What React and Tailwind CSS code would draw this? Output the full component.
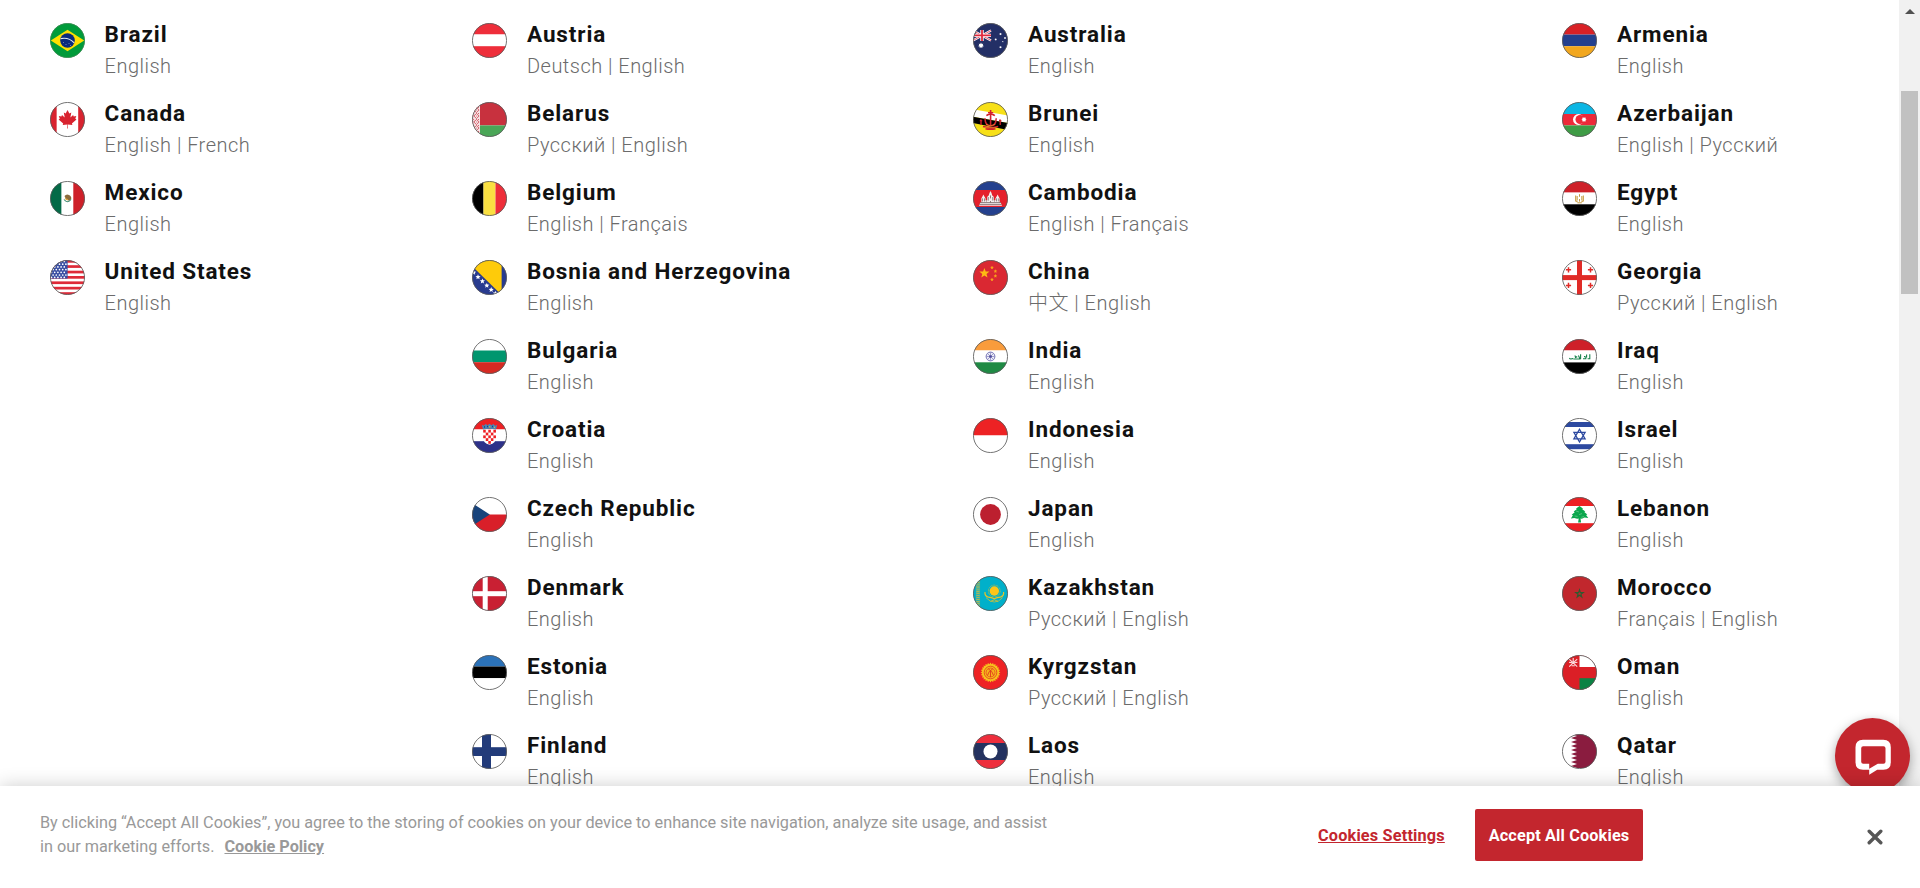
import React from "react";

/* Five-pointed star polygon, drawn inside an SVG flag. */
function Star({ cx, cy, r, fill, inner = 0.42, points = 5, ...rest }) {
  const pts = [];
  for (let i = 0; i < points * 2; i++) {
    const rad = i % 2 ? r * inner : r;
    const a = (Math.PI * i) / points - Math.PI / 2;
    pts.push(`${(cx + rad * Math.cos(a)).toFixed(2)},${(cy + rad * Math.sin(a)).toFixed(2)}`);
  }
  return <polygon points={pts.join(" ")} fill={fill} {...rest} />;
}

const R = (x, y, w, h, fill) => <rect x={x} y={y} width={w} height={h} fill={fill} />;
const H3 = (a, b, c, y1 = 11.5, y2 = 23.2) => (
  <>
    {R(0, 0, 35, y1, a)}
    {R(0, y1, 35, y2 - y1, b)}
    {R(0, y2, 35, 35 - y2, c)}
  </>
);
const V3 = (a, b, c, x1 = 11.5, x2 = 23.2) => (
  <>
    {R(0, 0, x1, 35, a)}
    {R(x1, 0, x2 - x1, 35, b)}
    {R(x2, 0, 35 - x2, 35, c)}
  </>
);

const flags = {
  Brazil: (
    <>
      {R(0, 0, 35, 35, "#009b3a")}
      <path d="M.8 17.5 17.5 6.8 34.2 17.5 17.5 28.3Z" fill="#fedf00" />
      <circle cx="17.5" cy="17.5" r="7.3" fill="#0a2a7c" />
      <path d="M10.6 15.6q8-1.8 13.6 4.2" fill="none" stroke="#dfe8ee" strokeWidth="1.1" />
      <path d="M13 19.5h1M15.5 21.5h1M18.5 20.5h1M20 22.5h1" stroke="#7f92c4" strokeWidth=".8" />
    </>
  ),
  Canada: (
    <>
      {V3("#d8232f", "#fff", "#d8232f", 6.8, 28.2)}
      <path
        d="M17.5 8l1.9 3.5 1.9-.9-.9 5 2.7-2.6.6 1.4 2.6-.4-1 2.8 1.2.8-4.6 3.9.5 1.6-4.6-.7.1 4h-.7l.1-4-4.6.7.5-1.6-4.6-3.9 1.2-.8-1-2.8 2.6.4.6-1.4 2.7 2.6-.9-5 1.9.9z"
        fill="#d8232f"
      />
    </>
  ),
  Mexico: (
    <>
      {V3("#046a47", "#fff", "#ce2029", 11.6, 23.3)}
      <path d="M14.5 15q2-2.4 4.5-1 2.8 1.2 2.2 4.2l-2.2 1.6-3-1.6z" fill="#8b6b3d" />
      <path d="M14 18.5q3.5 4.5 7 0" fill="none" stroke="#3f8a72" strokeWidth="1.2" />
      <path d="M15 17.5l3 1.4" stroke="#d9a23a" strokeWidth="1.2" />
    </>
  ),
  "United States": (
    <>
      {R(0, 0, 35, 35, "#fff")}
      {[0, 5.2, 10.7, 16, 21.4, 26.8, 32.2].map((y) => (
        <rect key={y} x="0" y={y} width="35" height="2.7" fill="#de2a38" />
      ))}
      {R(0, 0, 17.6, 18.6, "#3a4fa3")}
      {[1.5, 4.2, 6.9, 9.6, 12.3, 15, 17.4].map((y, r) =>
        [1.5, 4.7, 7.9, 11.1, 14.3].map((x) => (
          <circle key={`${x}-${y}`} cx={x + (r % 2) * 1.6} cy={y} r=".85" fill="#fff" />
        ))
      )}
    </>
  ),
  Austria: H3("#ee2e3a", "#fff", "#ee2e3a"),
  Belarus: (
    <>
      {R(0, 0, 35, 23.4, "#c8313e")}
      {R(0, 23.4, 35, 12, "#4aa657")}
      {R(0, 0, 8, 35, "#f7e3e4")}
      {[2, 8, 14, 20, 26, 32].map((y) => (
        <path
          key={y}
          d={`M4.5 ${y - 2.6}l2.6 2.6-2.6 2.6-2.6-2.6zM.4 ${y}h1M4.3 ${y}h.9M1 ${y - 3}l1.2 1M7 ${y - 3}l-1 1`}
          fill="none"
          stroke="#cb4450"
          strokeWidth=".8"
        />
      ))}
    </>
  ),
  Belgium: V3("#000", "#fae042", "#ee2e3a", 11.5, 23.5),
  "Bosnia and Herzegovina": (
    <>
      {R(0, 0, 35, 35, "#283b8f")}
      <path d="M-6 0H29.6V35z" fill="#fecb0a" />
      {[
        [1.6, 12.6],
        [6, 17],
        [10.4, 21.2],
        [14.8, 25.6],
        [19.2, 29.8],
        [23.4, 33.4],
      ].map(([x, y]) => (
        <Star key={x} cx={x} cy={y} r={2.7} inner={0.45} fill="#fff" />
      ))}
    </>
  ),
  Bulgaria: H3("#fff", "#00966e", "#d62a22"),
  Croatia: (
    <>
      {H3("#ee2024", "#fff", "#2d3189")}
      <path d="M11 11.5h13v8.5q0 5-6.5 6.8Q11 25 11 20z" fill="#fff" />
      {[0, 1, 2, 3, 4].map((r) =>
        [0, 1, 2, 3, 4]
          .filter((c) => (r + c) % 2 === 0 && !(r === 4 && c % 4 === 0))
          .map((c) => (
            <rect key={`${r}${c}`} x={11.2 + c * 2.55} y={11.8 + r * 2.8} width="2.55" height="2.8" fill="#ee2024" />
          ))
      )}
      <path d="M11 11.6 9.8 6.8l2 .9 1.9-1.6 1.9 1.2 1.9-1.6 1.9 1.6 1.9-1.2 1.9 1.6 2-.9-1.2 4.8q-6.5-1.8-13 0z" fill="#4a86b4" />
      <path d="M12 9h1M15 8.5h1M20 8.5h1" stroke="#1f3f86" strokeWidth="1.6" />
      <path d="M17 8.8h1.4M22 9.4h1" stroke="#d9b84a" strokeWidth="1.2" />
    </>
  ),
  "Czech Republic": (
    <>
      {R(0, 0, 35, 17.5, "#fff")}
      {R(0, 17.5, 35, 17.5, "#d91f29")}
      <path d="M0 6v23l17.8-11.5z" fill="#18437b" />
    </>
  ),
  Denmark: (
    <>
      {R(0, 0, 35, 35, "#c92033")}
      {R(10.7, 0, 5, 35, "#fff")}
      {R(0, 15.2, 35, 5, "#fff")}
    </>
  ),
  Estonia: H3("#2b72b9", "#000", "#fff"),
  Finland: (
    <>
      {R(0, 0, 35, 35, "#fff")}
      {R(10, 0, 9, 35, "#223b7a")}
      {R(0, 13.2, 35, 8.8, "#223b7a")}
    </>
  ),
  Australia: (
    <>
      {R(0, 0, 35, 35, "#232f66")}
      <path d="M0 7.5l18 10M18 7.5l-18 10" stroke="#fff" strokeWidth="2.2" />
      <path d="M0 7.5l18 10M18 7.5l-18 10" stroke="#e0334a" strokeWidth=".8" />
      <path d="M9 7v11M0 12.4h18" stroke="#fff" strokeWidth="3.4" />
      <path d="M9 7v11M0 12.4h18" stroke="#e0283c" strokeWidth="1.8" />
      <Star cx={8} cy={22.5} r={2.9} points={7} inner={0.6} fill="#fff" />
      <Star cx={27.5} cy={11} r={1.3} points={7} inner={0.6} fill="#fff" />
      <Star cx={22.7} cy={16.5} r={1.2} points={7} inner={0.6} fill="#fff" />
      <Star cx={32} cy={15} r={1.2} points={7} inner={0.6} fill="#fff" />
      <Star cx={29.8} cy={18.6} r={0.9} fill="#fff" />
      <Star cx={27.5} cy={24.2} r={1.3} points={7} inner={0.6} fill="#fff" />
    </>
  ),
  Brunei: (
    <>
      {R(0, 0, 35, 35, "#f7e017")}
      <path d="M0 7.2 35 13.5V21L0 14.8z" fill="#fff" />
      <path d="M0 14.8 35 21v7L0 21z" fill="#000" />
      <g fill="none" stroke="#d3222c">
        <path d="M17.6 8v15" strokeWidth="1.6" />
        <path d="M13.4 13.6q4.2-3.6 8.4 0" strokeWidth="1.6" />
        <path d="M15 10.5h5.2" strokeWidth="1" />
        <path d="M12 16.2q0 7.6 5.6 7.6t5.6-7.6" strokeWidth="1.5" />
        <path d="M8 17.5v5.5M27.2 17.5v5.5M6.8 18.5l2.4.4M26 18.5l2.4.4" strokeWidth="1.4" />
        <path d="M10 24.6q7.6 2.2 15.2 0M12.5 26.8q5 1 10 0" strokeWidth="1.6" />
      </g>
      <path d="M13 22.4q4.6 2.6 9.2 0M11.5 25.7h12" fill="none" stroke="#f0c12c" strokeWidth=".5" />
    </>
  ),
  Cambodia: (
    <>
      {H3("#24408e", "#e5202c", "#24408e", 9, 26)}
      <path
        d="M6 24.8l1.3-3.4h1v-4l1.1-1.8 1-2.2 1 2.2 1.2 1.8v1.8h1.5V16l1.6-1.5.8-2.6 1-1.9 1 1.9.8 2.6 1.6 1.5v3.2h1.5v-1.8l1.2-1.8 1-2.2 1 2.2 1.1 1.8v4h1l1.3 3.4z"
        fill="#f4eeee"
      />
      <path
        d="M7.2 21.6h20.6M6.4 23.4h22.2M9.4 17.4v3M11.6 17.4v3M15.2 16v3.6M17.5 14.4v3M19.8 16v3.6M23.6 17.4v3M25.8 17.4v3M17.5 20v1.4M13.5 19.5v1M21.5 19.5v1"
        stroke="#5e4a4c"
        strokeWidth=".7"
      />
    </>
  ),
  China: (
    <>
      {R(0, 0, 35, 35, "#da2832")}
      <Star cx={11.4} cy={13.2} r={5.3} fill="#fdb913" />
      <Star cx={19} cy={7.6} r={1.9} inner={0.5} fill="#f9a01b" />
      <Star cx={22.4} cy={11.2} r={1.9} inner={0.5} fill="#f9a01b" />
      <Star cx={22.4} cy={16} r={1.9} inner={0.5} fill="#f9a01b" />
      <Star cx={19} cy={19.6} r={1.9} inner={0.5} fill="#f9a01b" />
    </>
  ),
  India: (
    <>
      {H3("#f99c3c", "#fff", "#1f8a44", 11.5, 23.3)}
      <circle cx="17.5" cy="17.5" r="4.4" fill="#eeeef8" stroke="#6a68ae" strokeWidth=".9" />
      <path
        d="M17.5 13.5v8M13.5 17.5h8M14.7 14.7l5.6 5.6M20.3 14.7l-5.6 5.6"
        stroke="#5f5da8"
        strokeWidth=".55"
      />
      <circle cx="17.5" cy="17.5" r="1.3" fill="#4a4899" />
    </>
  ),
  Indonesia: (
    <>
      {R(0, 0, 35, 17.5, "#ed2224")}
      {R(0, 17.5, 35, 17.5, "#fff")}
    </>
  ),
  Japan: (
    <>
      {R(0, 0, 35, 35, "#fff")}
      <circle cx="17.5" cy="17.5" r="10.4" fill="#bc1f2f" />
    </>
  ),
  Kazakhstan: (
    <>
      {R(0, 0, 35, 35, "#00b0ca")}
      <path d="M5 4v27" stroke="#a9b75a" strokeWidth="3.6" strokeDasharray="1.4 .7" />
      <path d="M3.4 3v29M6.6 3v29" stroke="#6fb487" strokeWidth=".5" />
      <circle cx="21.3" cy="15" r="4.7" fill="#fdc518" />
      <circle cx="21.3" cy="15" r="5.9" fill="none" stroke="#c3bd42" strokeWidth=".9" strokeDasharray=".9 .6" />
      <g fill="none" stroke="#e5c229">
        <path d="M12 16q-.6 4 3.4 5.2 3 .4 5.9 1.6 2.9-1.2 5.9-1.6 4-1.2 3.4-5.2" strokeWidth="1.2" />
        <path d="M13 21.6q4 4.6 8.3 4.4 4.3.2 8.3-4.4" strokeWidth=".7" />
        <path d="M17.5 25.4l3.8-1.6 3.8 1.6" strokeWidth=".8" />
      </g>
    </>
  ),
  Kyrgzstan: (
    <>
      {R(0, 0, 35, 35, "#ee2224")}
      <Star cx={17.5} cy={17.5} r={9.9} points={24} inner={0.84} fill="#f6c21c" />
      <circle cx="17.5" cy="17.5" r="6.3" fill="none" stroke="#e8471f" strokeWidth=".9" />
      <circle cx="17.5" cy="17.5" r="4.5" fill="#f6b21c" stroke="#e8471f" strokeWidth=".8" />
      <path d="M14.4 20.6q1-4.6 5.4-6.8M20.6 20.6q-1-4.6-5.4-6.8M17.5 22v-6" fill="none" stroke="#e23a1f" strokeWidth=".9" />
    </>
  ),
  Laos: (
    <>
      {H3("#ee2e3c", "#24325f", "#ee2e3c", 9, 26)}
      <circle cx="17.5" cy="17.5" r="7" fill="#fff" />
    </>
  ),
  Armenia: H3("#d92126", "#24408e", "#f2a71e", 11.6, 23.2),
  Azerbaijan: (
    <>
      {H3("#0bb6e4", "#ed2939", "#3f9c46", 12, 23.4)}
      <circle cx="16.4" cy="17.5" r="5.4" fill="#fff" />
      <circle cx="18" cy="17.5" r="4.5" fill="#ed2939" />
      <Star cx={22} cy={17.5} r={2.7} points={8} inner={0.6} fill="#fff" />
    </>
  ),
  Egypt: (
    <>
      {H3("#ce2029", "#fff", "#000", 11.6, 23.3)}
      <path d="M13.6 14.4v5.4l2 1.2M21.4 14.4v5.4l-2 1.2M15.2 15v4.6M19.8 15v4.6" fill="none" stroke="#cfa95a" strokeWidth="1.2" />
      <path d="M17.5 13.2v2.6M17.5 18v2.6M15.4 21.8h4.4" fill="none" stroke="#c49a45" strokeWidth="1" />
    </>
  ),
  Georgia: (
    <>
      {R(0, 0, 35, 35, "#fff")}
      {R(15, 0, 5, 35, "#e02b27")}
      {R(0, 15.1, 35, 5, "#e02b27")}
      <path
        d="M6.5 7.2v5.2M3.9 9.8h5.2M28.5 7.2v5.2M25.9 9.8h5.2M6.5 22.8V28M3.9 25.4h5.2M28.5 22.8V28M25.9 25.4h5.2"
        stroke="#e02b27"
        strokeWidth="1.5"
      />
    </>
  ),
  Iraq: (
    <>
      {H3("#ce2029", "#fff", "#000", 11.5, 23.4)}
      <path
        d="M7.4 19q.6 1.4 2.4.8l1.4-.2M11.4 20h7.2M12.6 16.8l2 1.2-1.6.8M16.4 16.6l1.4 3M18.6 15.2v4.8M21 19.8h2.8v-2.6M22 17.6h1M24.6 15.4v3M25.6 19.8h2.2v-4.6"
        fill="none"
        stroke="#16824b"
        strokeWidth="1.1"
      />
    </>
  ),
  Israel: (
    <>
      {R(0, 0, 35, 35, "#fff")}
      {R(0, 4, 35, 5, "#2c49a0")}
      {R(0, 26.2, 35, 5, "#2c49a0")}
      <path d="M17.5 11.2l5.6 9.7H11.9zM17.5 24l-5.6-9.7h11.2z" fill="none" stroke="#2c49a0" strokeWidth="1.3" />
    </>
  ),
  Lebanon: (
    <>
      {H3("#ed2024", "#fff", "#ed2024", 9, 26.2)}
      <path
        d="M17.5 9l3.4 2.4-.6.8 3 2.2-1 .7 3 2.4-1.2.5 2.2 3-3.8-.4-2.6 1.2-1.4-.4.6 4h-3l.6-4-1.6.4-2.8-.8-3.4.4 2-3.2-1.2-.4 3-2.6-1-.6 3-2.4-.6-.8z"
        fill="#0ba74d"
      />
      <path d="M14 14l3 1M20 16.6l-3 1M12.6 19l3 .4M22 19.6l-2.6.6" stroke="#7fd19c" strokeWidth=".6" />
    </>
  ),
  Morocco: (
    <>
      {R(0, 0, 35, 35, "#c1272d")}
      <Star cx={17.5} cy={17.8} r={3.9} inner={0.38} fill="none" stroke="#2f5a2f" strokeWidth="1.1" />
    </>
  ),
  Oman: (
    <>
      {R(0, 0, 35, 35, "#db1f26")}
      {R(17.5, 0, 17.5, 12, "#fff")}
      {R(17.5, 23.2, 17.5, 12, "#0c8244")}
      <path
        d="M7.2 4.2l8 7.4M15.2 4.2l-8 7.4M11.2 3v5M7 7.2l3 .6M12.4 7.8l3-.6M9.6 10.8h3.2"
        fill="none"
        stroke="#fae0e1"
        strokeWidth="1.1"
      />
    </>
  ),
  Qatar: (
    <>
      {R(0, 0, 35, 35, "#fff")}
      <path
        d="M35 0H9l6 2-6 2 6 2-6 2 6 2-6 2 6 2-6 2 6 2-6 2 6 2-6 2 6 2-6 2 6 2-6 2 6 2H35z"
        fill="#8a1c3f"
      />
    </>
  ),
};

const columns = [
  {
    width: "w-[422px]",
    gap: "gap-[19.6px]",
    items: [
      ["Brazil", "English"],
      ["Canada", "English | French"],
      ["Mexico", "English"],
      ["United States", "English"],
    ],
  },
  {
    width: "w-[501px]",
    gap: "gap-5",
    items: [
      ["Austria", "Deutsch | English"],
      ["Belarus", "Русский | English"],
      ["Belgium", "English | Français"],
      ["Bosnia and Herzegovina", "English"],
      ["Bulgaria", "English"],
      ["Croatia", "English"],
      ["Czech Republic", "English"],
      ["Denmark", "English"],
      ["Estonia", "English"],
      ["Finland", "English"],
    ],
  },
  {
    width: "w-[589px]",
    gap: "gap-5",
    items: [
      ["Australia", "English"],
      ["Brunei", "English"],
      ["Cambodia", "English | Français"],
      ["China", "中文 | English"],
      ["India", "English"],
      ["Indonesia", "English"],
      ["Japan", "English"],
      ["Kazakhstan", "Русский | English"],
      ["Kyrgzstan", "Русский | English"],
      ["Laos", "English"],
    ],
  },
  {
    width: "w-[330px]",
    gap: "gap-5",
    items: [
      ["Armenia", "English"],
      ["Azerbaijan", "English | Русский"],
      ["Egypt", "English"],
      ["Georgia", "Русский | English"],
      ["Iraq", "English"],
      ["Israel", "English"],
      ["Lebanon", "English"],
      ["Morocco", "Français | English"],
      ["Oman", "English"],
      ["Qatar", "English"],
    ],
  },
];

function Flag({ name }) {
  const id = "clip-" + name.replace(/\s/g, "");
  return (
    <svg viewBox="0 0 35 35" className="mt-[5px] size-[35px] shrink-0" aria-hidden="true">
      <clipPath id={id}>
        <circle cx="17.5" cy="17.5" r="17.3" />
      </clipPath>
      <g clipPath={`url(#${id})`}>{flags[name]}</g>
      <circle cx="17.5" cy="17.5" r="17.05" fill="none" stroke={name === "Brazil" ? "#3f8a55" : "#5c5c5c"} strokeWidth=".85" />
    </svg>
  );
}

function Country({ name, languages, gap }) {
  return (
    <li className={`flex h-[79px] ${gap}`}>
      <Flag name={name} />
      <div className="whitespace-nowrap">
        <h3 className="h-[33px] text-[22.5px] leading-[33px] font-bold tracking-[0.88px] text-[#111]">{name}</h3>
        <p className="h-[31px] text-[20px] leading-[31px] font-light tracking-[0.48px] text-[#6b6b6b]">{languages}</p>
      </div>
    </li>
  );
}

function Scrollbar() {
  return (
    <div className="flex h-full w-[21px] shrink-0 flex-col items-center bg-[#f1f1f1]">
      <svg viewBox="0 0 10 5" className="mt-[9px] h-[5px] w-[10px]" aria-hidden="true">
        <path d="M0 5 5 0l5 5z" fill="#505050" />
      </svg>
      <div className="mt-[77px] h-[203px] w-[17px] bg-[#c1c1c1]" />
    </div>
  );
}

function ChatButton() {
  return (
    <button className="absolute top-[718px] left-[1835px] flex size-[75px] items-center justify-center rounded-full bg-[#c3262e] shadow-[0_4px_12px_rgba(0,0,0,0.35)]">
      <svg viewBox="0 0 36 36" className="size-9 overflow-visible" aria-hidden="true">
        <path
          d="M8 1.8H28.3Q35.8 1.8 35.8 9.3V24.3Q35.8 31.8 28.3 31.8H22.2L14.2 36.8V31.8H8Q.5 31.8 .5 24.3V9.3Q.5 1.8 8 1.8ZM8.2 8.2q-2 0-2 2V23.8q0 2 2 2H14.2V30.8L22.8 25.8H28.5q2 0 2-2V10.2q0-2-2-2Z"
          fill="#fff"
          fillRule="evenodd"
        />
      </svg>
    </button>
  );
}

function CookieBanner() {
  return (
    <section className="absolute inset-x-0 bottom-0 flex h-[102px] bg-white pl-10 shadow-[0_0_18px_rgba(0,0,0,0.2)]">
      <p className="mt-[25px] w-[1278px] text-[16.26px] leading-6 text-[#999]">
        By clicking “Accept All Cookies”, you agree to the storing of cookies on your device to enhance site navigation, analyze site usage, and assist
        <br />
        in our marketing efforts.
        <a className="ml-[10px] font-bold underline">Cookie Policy</a>
      </p>
      <button className="mt-[23px] h-[52px] w-[127px] pt-[2px] text-left text-[16.26px] font-bold tracking-[0.18px] whitespace-nowrap text-[#c3262e] underline">
        Cookies Settings
      </button>
      <button className="mt-[23px] ml-[30px] h-[52px] w-[168px] rounded-[2px] bg-[#c3262e] pt-[2px] text-[16.26px] font-bold tracking-[0.15px] whitespace-nowrap text-white">
        Accept All Cookies
      </button>
      <svg viewBox="0 0 16 16" className="mt-[43px] ml-[224px] size-4" aria-hidden="true">
        <path d="M2.2 2.2l11.6 11.6M13.8 2.2 2.2 13.8" stroke="#565656" strokeWidth="3.4" strokeLinecap="round" />
      </svg>
    </section>
  );
}

export default function App() {
  return (
    <div className="relative flex h-[888px] w-[1920px] overflow-hidden bg-white font-[Roboto,'Noto_Sans_CJK_SC',sans-serif]">
      <main className="flex min-w-0 flex-1 items-start overflow-hidden pt-[18px] pl-[50px]">
        {columns.map((c) => (
          <ul key={c.width} className={`${c.width} shrink-0`}>
            {c.items.map(([name, languages]) => (
              <Country key={name} name={name} languages={languages} gap={c.gap} />
            ))}
          </ul>
        ))}
      </main>
      <Scrollbar />
      <ChatButton />
      <CookieBanner />
    </div>
  );
}
